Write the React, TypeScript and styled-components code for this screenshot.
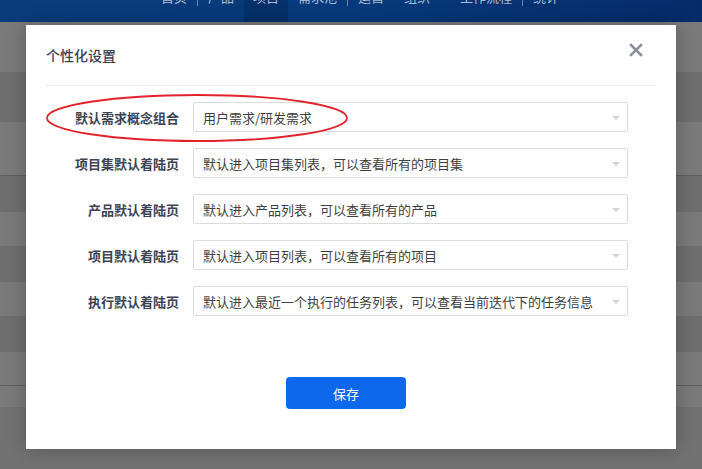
import React from "react";
import styled, { createGlobalStyle } from "styled-components";

const GlobalStyle = createGlobalStyle`
  html, body { margin: 0; padding: 0; }
  body {
    width: 702px;
    height: 469px;
    overflow: hidden;
    font-family: "Noto Sans CJK SC", "Noto Sans", sans-serif;
    background: #727272;
  }
  * { box-sizing: border-box; }
`;

const Page = styled.div`
  position: relative;
  width: 702px;
  height: 469px;
  overflow: hidden;
  display: flex;
  flex-direction: column;
`;

const Header = styled.header`
  height: 22px;
  flex: none;
  background: linear-gradient(90deg, #0b3b7b 0%, #073a7c 50%, #062b69 100%);
  display: flex;
  align-items: flex-start;
  padding-left: 151px;
  overflow: hidden;
`;

const NavItem = styled.div<{ $active?: boolean; $wide?: boolean }>`
  height: 22px;
  padding: 0 ${(p) => (p.$active ? 9 : 10)}px;
  padding-left: ${(p) => (p.$wide ? 20 : p.$active ? 9 : 10)}px;
  background: ${(p) => (p.$active ? "#06306a" : "transparent")};
  color: #aebbd2;
  font-size: 13px;
  line-height: 20px;
  span {
    display: block;
    margin-top: -13px;
  }
`;

const NavSep = styled.div`
  width: 1px;
  height: 6px;
  background: #6f86ab;
  flex: none;
`;

const Stripe = styled.div<{ $h: number; $dark?: boolean; $line?: boolean }>`
  height: ${(p) => p.$h}px;
  flex: none;
  background: ${(p) => (p.$dark ? "#6e6e6e" : "#7a7a7a")};
  border-bottom: ${(p) => (p.$line ? "1px solid #5f5f5f" : "none")};
`;

const Rest = styled.div`
  flex: 1;
  background: #727272;
`;

const Modal = styled.div`
  position: absolute;
  left: 26px;
  top: 25px;
  width: 650px;
  height: 424px;
  background: #ffffff;
  box-shadow: 0 0 18px rgba(0, 0, 0, 0.25);
  padding: 0 20px;
  display: flex;
  flex-direction: column;
`;

const ModalHeader = styled.div`
  height: 61px;
  border-bottom: 1px solid #ececec;
  display: flex;
  align-items: center;
  justify-content: space-between;
  padding-bottom: 1px;
`;

const Title = styled.div`
  font-size: 14px;
  font-weight: 500;
  color: #3c4353;
  line-height: 20px;
`;

const Close = styled.button`
  border: none;
  background: none;
  padding: 0;
  width: 16px;
  height: 16px;
  margin-right: 12px;
  margin-top: -10px;
  display: flex;
  align-items: center;
  justify-content: center;
  cursor: pointer;
`;

const Form = styled.div`
  margin-top: 16px;
  display: flex;
  flex-direction: column;
  gap: 16px;
`;

const Row = styled.div`
  position: relative;
  display: grid;
  grid-template-columns: 133px 435px;
  column-gap: 14px;
  align-items: center;
  height: 30px;
`;

const Label = styled.div`
  text-align: right;
  font-size: 13px;
  font-weight: 700;
  color: #3c4353;
  white-space: nowrap;
  position: relative;
  z-index: 1;
`;

const Select = styled.div`
  height: 30px;
  border: 1px solid #dcdcdc;
  border-radius: 2px;
  padding: 0 28px 0 9px;
  display: flex;
  align-items: center;
  position: relative;
  font-size: 13px;
  color: #3f3f3f;
  white-space: nowrap;
  overflow: hidden;
  background: #fff;
`;

const Caret = styled.span`
  position: absolute;
  right: 7px;
  top: 13px;
  width: 0;
  height: 0;
  border-left: 4px solid transparent;
  border-right: 4px solid transparent;
  border-top: 4px solid #d4d4d4;
`;

const Ellipse = styled.svg`
  position: absolute;
  left: 0px;
  top: -8px;
  width: 302px;
  height: 48px;
  pointer-events: none;
  z-index: 2;
  overflow: visible;
`;

const Footer = styled.div`
  margin-top: 61px;
  display: flex;
  justify-content: center;
  padding-right: 10px;
`;

const SaveButton = styled.button`
  width: 120px;
  height: 32px;
  border: none;
  border-radius: 4px;
  background: #0d68eb;
  color: #ffffff;
  font-family: "Noto Sans CJK SC", sans-serif;
  font-size: 13px;
  cursor: pointer;
`;

const rows = [
  { label: "默认需求概念组合", value: "用户需求/研发需求" },
  { label: "项目集默认着陆页", value: "默认进入项目集列表，可以查看所有的项目集" },
  { label: "产品默认着陆页", value: "默认进入产品列表，可以查看所有的产品" },
  { label: "项目默认着陆页", value: "默认进入项目列表，可以查看所有的项目" },
  { label: "执行默认着陆页", value: "默认进入最近一个执行的任务列表，可以查看当前迭代下的任务信息" },
];

const stripes: { h: number; dark?: boolean; line?: boolean }[] = [
  { h: 50 },
  { h: 50, dark: true },
  { h: 54, line: true },
  { h: 36, dark: true },
  { h: 34 },
  { h: 36, dark: true },
  { h: 34 },
  { h: 36, dark: true },
  { h: 34, line: true },
  { h: 21 },
];

export default function App() {
  return (
    <>
      <GlobalStyle />
      <Page>
        <Header>
          <NavItem><span>首页</span></NavItem>
          <NavSep />
          <NavItem><span>产品</span></NavItem>
          <NavItem $active><span>项目</span></NavItem>
          <NavItem><span>需求池</span></NavItem>
          <NavSep />
          <NavItem><span>运营</span></NavItem>
          <NavItem><span>组织</span></NavItem>
          <NavItem $wide><span>工作流程</span></NavItem>
          <NavSep />
          <NavItem><span>统计</span></NavItem>
        </Header>
        {stripes.map((s, i) => (
          <Stripe key={i} $h={s.h} $dark={s.dark} $line={s.line} />
        ))}
        <Rest />

        <Modal>
          <ModalHeader>
            <Title>个性化设置</Title>
            <Close aria-label="关闭">
              <svg width="14" height="14" viewBox="0 0 14 14">
                <path d="M2 2 L12 12 M12 2 L2 12" stroke="#8a90a0" strokeWidth="2.6" strokeLinecap="square" />
              </svg>
            </Close>
          </ModalHeader>
          <Form>
            {rows.map((r, i) => (
              <Row key={r.label}>
                {i === 0 && (
                  <Ellipse viewBox="0 0 302 48">
                    <ellipse cx="151" cy="24" rx="150" ry="23" fill="none" stroke="#e3232c" strokeWidth="1.8" />
                  </Ellipse>
                )}
                <Label>{r.label}</Label>
                <Select>
                  {r.value}
                  <Caret />
                </Select>
              </Row>
            ))}
          </Form>
          <Footer>
            <SaveButton>保存</SaveButton>
          </Footer>
        </Modal>
      </Page>
    </>
  );
}
